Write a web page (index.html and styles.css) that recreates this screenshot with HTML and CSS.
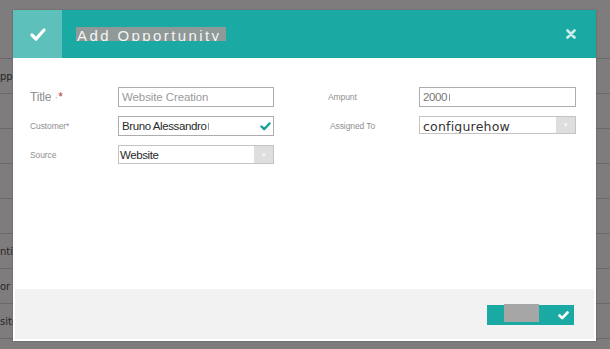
FILE: index.html
```html
<!DOCTYPE html>
<html lang="en">
<head>
    <meta charset="UTF-8">
    <meta name="viewport" content="width=device-width, initial-scale=1.0">
    <title>Add Opportunity</title>
    <link rel="stylesheet" href="styles.css">
</head>
<body>
    <div class="page">
        <div class="page-head"></div>
        <div class="row"><span>pp</span></div>
        <div class="row"></div>
        <div class="row"></div>
        <div class="row"></div>
        <div class="row"></div>
        <div class="row"><span>ntity</span></div>
        <div class="row"><span>or i</span></div>
        <div class="row"><span>site</span></div>
    </div>

    <div class="modal">
        <div class="modal-head">
            <div class="head-icon">
                <svg width="16" height="13" viewBox="0 0 16 13">
                    <polyline points="2,7 6,11 14,2" fill="none" stroke="#fff" stroke-width="3.2" stroke-linecap="round" stroke-linejoin="round"/>
                </svg>
            </div>
            <h3 class="modal-title"><span>Add Opportunity</span></h3>
            <button class="close-btn">
                <svg width="10" height="10" viewBox="0 0 10 10">
                    <path d="M1.5 1.5 L8.5 8.5 M8.5 1.5 L1.5 8.5" stroke="#cdeeec" stroke-width="2.6" stroke-linecap="round"/>
                </svg>
            </button>
        </div>

        <div class="modal-body">
            <div class="form">
                <label class="lbl lbl-title">Title <span class="dot">·</span><span class="req">*</span></label>
                <div class="field"><span class="placeholder">Website Creation</span></div>
                <div></div>
                <label class="lbl lbl-small">Ampunt</label>
                <div class="field"><span class="muted">2000</span><span class="caret"></span></div>

                <label class="lbl lbl-small">Customer*</label>
                <div class="field">
                    <span class="value">Bruno Alessandro</span><span class="caret"></span>
                    <svg class="ok" width="11" height="9" viewBox="0 0 11 9">
                        <polyline points="1.5,4.5 4.2,7.2 9.5,1.5" fill="none" stroke="#1a9f95" stroke-width="2.4" stroke-linecap="round" stroke-linejoin="round"/>
                    </svg>
                </div>
                <div></div>
                <label class="lbl lbl-small lbl-indent">Assigned To</label>
                <div class="select select-short">
                    <span class="select-wide">configurehow</span>
                    <span class="arrow">&#9662;</span>
                </div>

                <label class="lbl lbl-small">Source</label>
                <div class="select">
                    <span class="value">Website</span>
                    <span class="arrow">&#9662;</span>
                </div>
            </div>
        </div>

        <div class="modal-foot">
            <button class="save-btn">
                <span class="save-label">Save</span>
                <svg width="11" height="9" viewBox="0 0 11 9">
                    <polyline points="1.5,4.5 4.2,7.2 9.5,1.5" fill="none" stroke="#fff" stroke-width="2.6" stroke-linecap="round" stroke-linejoin="round"/>
                </svg>
            </button>
        </div>
    </div>
</body>
</html>
```

FILE: styles.css
```css
:root {
    --teal: #1ba9a3;
    --teal-light: #5ec0bb;
    --page-grey: #7e7c7c;
    --line-grey: #6b6a6a;
    --label: #8f8f8f;
}

body, html {
    margin: 0;
    padding: 0;
    height: 100%;
    font-family: "Liberation Sans", Arial, sans-serif;
    background-color: var(--page-grey);
    overflow: hidden;
}

.page {
    display: flex;
    flex-direction: column;
}

.page-head {
    height: 58px;
    border-bottom: 1px solid var(--line-grey);
}

.row {
    height: 34px;
    border-bottom: 1px solid var(--line-grey);
    display: flex;
    align-items: center;
    font-family: "DejaVu Sans", sans-serif;
    font-size: 10px;
    color: #262626;
    white-space: nowrap;
}

/* modal */
.modal {
    position: absolute;
    top: 10px;
    left: 13px;
    width: 583px;
    height: 331px;
    background: #fff;
    display: flex;
    flex-direction: column;
    box-shadow: 0 0 2px rgba(0, 0, 0, 0.25);
}

.modal-head {
    height: 48px;
    background: var(--teal);
    display: flex;
    align-items: center;
}

.head-icon {
    width: 49px;
    height: 48px;
    background: var(--teal-light);
    display: flex;
    justify-content: center;
    align-items: center;
}

.modal-title {
    margin: 0 0 0 14px;
    font-size: 15px;
    font-weight: normal;
    flex: 1;
    align-self: flex-start;
    padding-top: 17px;
}

.modal-title span {
    display: inline-block;
    height: 12px;
    padding: 2px 5px 0 1px;
    line-height: 14px;
    overflow: hidden;
    background: #8e9998;
    color: #f4f4f4;
    letter-spacing: 2.4px;
}

.close-btn {
    background: none;
    border: none;
    padding: 0;
    margin-right: 20px;
    width: 10px;
    height: 10px;
    display: flex;
}

.modal-body {
    flex: 1;
}

.form {
    display: grid;
    grid-template-columns: 88px 156px 54px 91px 157px;
    grid-template-rows: 20px 20px 19px;
    row-gap: 9px;
    padding: 29px 0 0 17px;
}

.lbl {
    align-self: center;
    color: var(--label);
    white-space: nowrap;
}

.lbl-title {
    font-size: 12px;
    letter-spacing: -0.2px;
}

.lbl-title .dot {
    color: #bbb;
}

.lbl-title .req {
    color: #c0392b;
}

.lbl-small {
    font-size: 8.5px;
    letter-spacing: -0.1px;
}

.lbl-indent {
    padding-left: 2px;
}

.field,
.select {
    border: 1px solid #adadad;
    display: flex;
    align-items: center;
    padding-left: 3px;
    font-size: 11.5px;
    letter-spacing: -0.4px;
    overflow: hidden;
    white-space: nowrap;
}

.placeholder {
    color: #9a9a9a;
    letter-spacing: -0.1px;
}

.value {
    color: #2a2a2a;
}

.muted {
    color: #777;
}

.caret {
    width: 1px;
    height: 7px;
    margin-left: 2px;
    background: #999;
}

.ok {
    margin-left: auto;
    margin-right: 2px;
}

.select {
    padding-left: 1px;
    border-color: #c4c4c4;
}

.select-short {
    height: 16px;
    align-self: start;
    padding-left: 3px;
}

.select-wide {
    font-family: "DejaVu Sans", sans-serif;
    font-size: 12.5px;
    letter-spacing: 0.2px;
    color: #333;
    line-height: 14px;
    padding-top: 3px;
}

.arrow {
    margin-left: auto;
    width: 19px;
    align-self: stretch;
    background: #dedede;
    color: #f7f7f7;
    font-size: 7px;
    letter-spacing: 0;
    display: flex;
    justify-content: center;
    align-items: center;
}

.modal-foot {
    height: 50px;
    margin: 0 2px 2px;
    background: #f2f2f2;
    display: flex;
    justify-content: flex-end;
    align-items: flex-start;
    padding: 16px 20px 0 0;
    box-sizing: border-box;
}

.save-btn {
    width: 87px;
    height: 20px;
    background: var(--teal);
    border: none;
    padding: 0 0 0 17px;
    display: flex;
    align-items: center;
}

.save-label {
    align-self: flex-start;
    margin-top: -1px;
    width: 35px;
    height: 18px;
    background: #a6a6a6;
    color: #a6a6a6;
    font-size: 11px;
    line-height: 18px;
    font-family: "Liberation Sans", Arial, sans-serif;
}

.save-btn svg {
    margin-left: auto;
    margin-right: 5px;
}
```
